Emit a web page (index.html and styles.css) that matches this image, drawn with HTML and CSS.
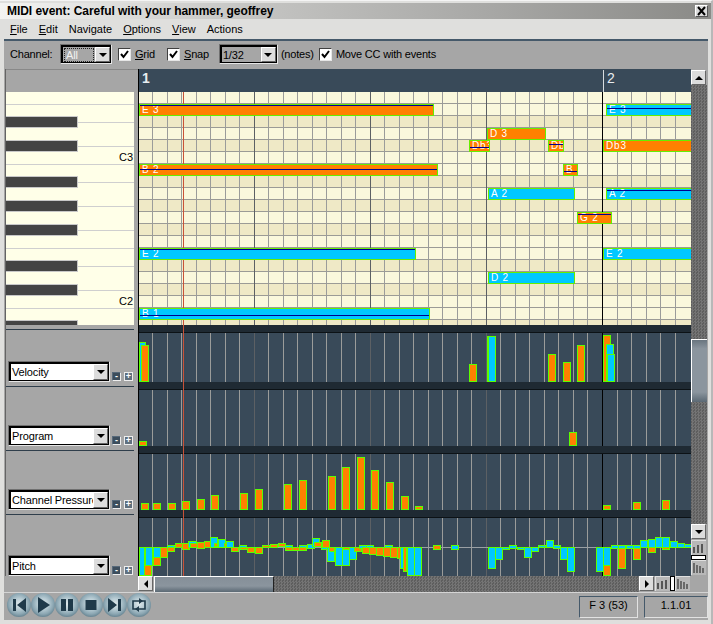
FILE: index.html
```html
<!DOCTYPE html>
<html>
<head>
<meta charset="utf-8">
<title>MIDI event</title>
<link rel="stylesheet" href="styles.css">
</head>
<body>
<div class="window">
  <header class="titlebar">
    <span class="title">MIDI event: Careful with your hammer, geoffrey</span>
    <span class="close"><svg width="11" height="10" viewBox="0 0 11 10"><path d="M2 1l7 8M9 1L2 9" stroke="#000" stroke-width="2" fill="none"/></svg></span>
  </header>
  <nav class="menu">
    <span><u>F</u>ile</span><span><u>E</u>dit</span><span>Navigate</span><span><u>O</u>ptions</span><span><u>V</u>iew</span><span>Actions</span>
  </nav>
  <div class="frame">
    <div class="toolbar">
      <span class="lbl">Channel:</span>
      <div class="combo combo-ch"><div class="combo-in dis"><span class="focus">All</span><span class="drop"></span></div></div>
      <label class="chk chk1"><span class="box"><svg width="9" height="9" viewBox="0 0 9 9"><path d="M1 4l2.5 3L8 1" stroke="#000" stroke-width="2" fill="none"/></svg></span><span><u>G</u>rid</span></label>
      <label class="chk chk2"><span class="box"><svg width="9" height="9" viewBox="0 0 9 9"><path d="M1 4l2.5 3L8 1" stroke="#000" stroke-width="2" fill="none"/></svg></span><span><u>S</u>nap</span></label>
      <div class="combo combo-sn"><div class="combo-in dis2"><span class="val">1/32</span><span class="drop"></span></div></div>
      <span class="lbl notes">(notes)</span>
      <label class="chk chk3"><span class="box"><svg width="9" height="9" viewBox="0 0 9 9"><path d="M1 4l2.5 3L8 1" stroke="#000" stroke-width="2" fill="none"/></svg></span><span>Move CC with events</span></label>
    </div>

    <div class="main">
      <aside class="left">
        <div class="lhead"></div>
        <div class="piano">
          <div class="pr"></div>
          <div class="pr wb"></div>
          <div class="pr k"><i></i></div>
          <div class="pr"></div>
          <div class="pr k"><i></i></div>
          <div class="pr"><em>C3</em></div>
          <div class="pr wb"></div>
          <div class="pr k"><i></i></div>
          <div class="pr"></div>
          <div class="pr k"><i></i></div>
          <div class="pr"></div>
          <div class="pr k"><i></i></div>
          <div class="pr"></div>
          <div class="pr wb"></div>
          <div class="pr k"><i></i></div>
          <div class="pr"></div>
          <div class="pr k"><i></i></div>
          <div class="pr"><em>C2</em></div>
          <div class="pr wb"></div>
          <div class="pr k"><i></i></div>
        </div>
        <div class="cc cc1"><div class="ccrule"></div><div class="ccctl"><div class="combo combo-cc"><div class="combo-in"><span class="val">Velocity</span><span class="drop"></span></div></div><span class="mini minus">-</span><span class="mini plus">+</span></div></div>
        <div class="cc cc2"><div class="ccrule"></div><div class="ccctl"><div class="combo combo-cc"><div class="combo-in"><span class="val">Program</span><span class="drop"></span></div></div><span class="mini minus">-</span><span class="mini plus">+</span></div></div>
        <div class="cc cc2"><div class="ccrule"></div><div class="ccctl"><div class="combo combo-cc"><div class="combo-in"><span class="val">Channel Pressure</span><span class="drop"></span></div></div><span class="mini minus">-</span><span class="mini plus">+</span></div></div>
        <div class="cc cc4"><div class="ccrule"></div><div class="ccctl"><div class="combo combo-cc"><div class="combo-in"><span class="val">Pitch</span><span class="drop"></span></div></div><span class="mini minus">-</span><span class="mini plus">+</span></div></div>
      </aside>

      <section class="canvas">
        <div class="timeline">
          <span class="barnum first">1</span>
          <span class="barnum second">2</span>
        </div>
        <div class="grid">
          <div class="row"></div><div class="row"></div><div class="row dk"></div><div class="row"></div><div class="row dk"></div>
          <div class="row"></div><div class="row"></div><div class="row dk"></div><div class="row"></div><div class="row dk"></div>
          <div class="row"></div><div class="row dk"></div><div class="row"></div><div class="row"></div><div class="row dk"></div>
          <div class="row"></div><div class="row dk"></div><div class="row"></div><div class="row"></div><div class="row dk"></div>

          <div class="note or" style="left:0;top:12px;width:295px"><span>E 3</span><b style="top:0"></b></div>
          <div class="note cy" style="left:467px;top:12px;width:90px"><span>E 3</span><b style="top:3px"></b></div>
          <div class="note or" style="left:348px;top:36px;width:59px"><span>D 3</span><b style="top:-1px"></b></div>
          <div class="note or" style="left:330px;top:48px;width:21px"><span>Db3</span><b style="top:6px"></b></div>
          <div class="note or" style="left:409px;top:48px;width:16px"><span>Db3</span><b style="top:3px"></b></div>
          <div class="note or" style="left:464px;top:48px;width:92px"><span>Db3</span><b style="top:-1px"></b></div>
          <div class="note or" style="left:0;top:72px;width:299px"><span>B 2</span><b style="top:4px"></b></div>
          <div class="note or" style="left:424px;top:72px;width:15px"><span>B 2</span><b style="top:6px"></b></div>
          <div class="note cy" style="left:349px;top:96px;width:87px"><span>A 2</span><b style="top:-1px"></b></div>
          <div class="note cy" style="left:467px;top:96px;width:90px"><span>A 2</span><b style="top:1px"></b></div>
          <div class="note or" style="left:438px;top:120px;width:35px"><span>G 2</span><b style="top:1px"></b></div>
          <div class="note cy" style="left:0;top:156px;width:277px"><span>E 2</span><b style="top:0"></b></div>
          <div class="note cy" style="left:464px;top:156px;width:92px"><span>E 2</span><b style="top:-1px"></b></div>
          <div class="note cy" style="left:349px;top:180px;width:87px"><span>D 2</span><b style="top:-1px"></b></div>
          <div class="note cy" style="left:0;top:216px;width:291px"><span>B 1</span><b style="top:6px"></b></div>
        </div>

        <div class="band"></div>
        <div class="pane p1">
          <i class="b c" style="left:0;top:9px;width:7px;height:40px"></i>
          <i class="b o" style="left:2px;top:12px;width:8px;height:37px"></i>
          <i class="b o" style="left:330px;top:31px;width:8px;height:18px"></i>
          <i class="b o" style="left:348px;top:3px;width:8px;height:46px"></i>
          <i class="b c" style="left:349px;top:3px;width:8px;height:46px"></i>
          <i class="b o" style="left:409px;top:21px;width:8px;height:28px"></i>
          <i class="b o" style="left:424px;top:29px;width:8px;height:20px"></i>
          <i class="b o" style="left:438px;top:12px;width:8px;height:37px"></i>
          <i class="b o" style="left:464px;top:2px;width:8px;height:47px"></i>
          <i class="b c" style="left:467px;top:11px;width:8px;height:38px"></i>
          <i class="b c" style="left:468px;top:21px;width:8px;height:28px"></i>
        </div>
        <div class="band"></div>
        <div class="pane p2">
          <i class="b o" style="left:0;top:51px;width:8px;height:5px"></i>
          <i class="b o" style="left:430px;top:42px;width:8px;height:14px"></i>
        </div>
        <div class="band"></div>
        <div class="pane p2">
          <i class="b o" style="left:2px;top:49px;width:8px;height:7px"></i>
          <i class="b o" style="left:14px;top:49px;width:8px;height:7px"></i>
          <i class="b o" style="left:29px;top:49px;width:8px;height:7px"></i>
          <i class="b o" style="left:43px;top:47px;width:8px;height:9px"></i>
          <i class="b o" style="left:58px;top:45px;width:8px;height:11px"></i>
          <i class="b o" style="left:72px;top:41px;width:8px;height:15px"></i>
          <i class="b o" style="left:101px;top:39px;width:8px;height:17px"></i>
          <i class="b o" style="left:116px;top:35px;width:8px;height:21px"></i>
          <i class="b o" style="left:145px;top:30px;width:8px;height:26px"></i>
          <i class="b o" style="left:160px;top:26px;width:8px;height:30px"></i>
          <i class="b o" style="left:189px;top:22px;width:8px;height:34px"></i>
          <i class="b o" style="left:203px;top:13px;width:8px;height:43px"></i>
          <i class="b o" style="left:218px;top:3px;width:8px;height:53px"></i>
          <i class="b o" style="left:232px;top:16px;width:8px;height:40px"></i>
          <i class="b o" style="left:247px;top:28px;width:8px;height:28px"></i>
          <i class="b o" style="left:262px;top:42px;width:8px;height:14px"></i>
          <i class="b o" style="left:276px;top:52px;width:8px;height:4px"></i>
          <i class="b o" style="left:464px;top:51px;width:8px;height:5px"></i>
          <i class="b o" style="left:494px;top:48px;width:8px;height:8px"></i>
          <i class="b o" style="left:523px;top:46px;width:8px;height:10px"></i>
        </div>
        <div class="band"></div>
        <div class="pane p4">
          <div class="axis"></div>
          <i class="b c" style="left:0;top:29px;width:6px;height:29px"></i>
          <i class="b c" style="left:6px;top:29px;width:8px;height:19px"></i>
          <i class="b o" style="left:5px;top:47px;width:8px;height:11px"></i>
          <i class="b c" style="left:14px;top:29px;width:8px;height:11px"></i>
          <i class="b o" style="left:14px;top:39px;width:8px;height:9px"></i>
          <i class="b o" style="left:21px;top:29px;width:8px;height:11px"></i>
          <i class="b c" style="left:28px;top:27px;width:8px;height:3px"></i>
          <i class="b o" style="left:28px;top:29px;width:8px;height:5px"></i>
          <i class="b o" style="left:36px;top:25px;width:8px;height:5px"></i>
          <i class="b o" style="left:43px;top:25px;width:8px;height:7px"></i>
          <i class="b c" style="left:49px;top:23px;width:9px;height:7px"></i>
          <i class="b o" style="left:51px;top:25px;width:8px;height:5px"></i>
          <i class="b o" style="left:58px;top:24px;width:8px;height:7px"></i>
          <i class="b o" style="left:65px;top:23px;width:8px;height:7px"></i>
          <i class="b c" style="left:71px;top:19px;width:8px;height:11px"></i>
          <i class="b o" style="left:75px;top:25px;width:4px;height:4px"></i>
          <i class="b c" style="left:79px;top:21px;width:8px;height:9px"></i>
          <i class="b o" style="left:85px;top:25px;width:3px;height:4px"></i>
          <i class="b c" style="left:87px;top:23px;width:8px;height:7px"></i>
          <i class="b o" style="left:92px;top:29px;width:8px;height:5px"></i>
          <i class="b c" style="left:100px;top:27px;width:8px;height:5px"></i>
          <i class="b o" style="left:101px;top:29px;width:8px;height:3px"></i>
          <i class="b o" style="left:108px;top:29px;width:8px;height:6px"></i>
          <i class="b o" style="left:116px;top:29px;width:8px;height:7px"></i>
          <i class="b o" style="left:123px;top:27px;width:8px;height:3px"></i>
          <i class="b o" style="left:131px;top:26px;width:8px;height:4px"></i>
          <i class="b o" style="left:139px;top:25px;width:8px;height:4px"></i>
          <i class="b c" style="left:146px;top:27px;width:8px;height:3px"></i>
          <i class="b o" style="left:146px;top:29px;width:8px;height:4px"></i>
          <i class="b o" style="left:153px;top:29px;width:8px;height:4px"></i>
          <i class="b c" style="left:160px;top:27px;width:8px;height:3px"></i>
          <i class="b o" style="left:160px;top:29px;width:8px;height:4px"></i>
          <i class="b c" style="left:168px;top:26px;width:8px;height:5px"></i>
          <i class="b c" style="left:173px;top:20px;width:8px;height:9px"></i>
          <i class="b o" style="left:175px;top:24px;width:8px;height:5px"></i>
          <i class="b c" style="left:182px;top:29px;width:8px;height:3px"></i>
          <i class="b o" style="left:183px;top:22px;width:8px;height:8px"></i>
          <i class="b c" style="left:188px;top:29px;width:8px;height:15px"></i>
          <i class="b o" style="left:190px;top:29px;width:6px;height:5px"></i>
          <i class="b c" style="left:196px;top:29px;width:8px;height:19px"></i>
          <i class="b c" style="left:203px;top:29px;width:8px;height:19px"></i>
          <i class="b o" style="left:204px;top:29px;width:7px;height:3px"></i>
          <i class="b c" style="left:210px;top:29px;width:8px;height:13px"></i>
          <i class="b o" style="left:215px;top:29px;width:8px;height:5px"></i>
          <i class="b c" style="left:220px;top:27px;width:8px;height:4px"></i>
          <i class="b o" style="left:223px;top:29px;width:8px;height:7px"></i>
          <i class="b c" style="left:227px;top:27px;width:8px;height:3px"></i>
          <i class="b o" style="left:230px;top:29px;width:8px;height:8px"></i>
          <i class="b o" style="left:237px;top:29px;width:8px;height:9px"></i>
          <i class="b c" style="left:246px;top:27px;width:8px;height:3px"></i>
          <i class="b o" style="left:244px;top:29px;width:8px;height:10px"></i>
          <i class="b o" style="left:251px;top:29px;width:8px;height:11px"></i>
          <i class="b o" style="left:258px;top:29px;width:8px;height:12px"></i>
          <i class="b c" style="left:261px;top:29px;width:6px;height:22px"></i>
          <i class="b o" style="left:264px;top:29px;width:4px;height:25px"></i>
          <i class="b c" style="left:268px;top:29px;width:8px;height:29px"></i>
          <i class="b c" style="left:275px;top:29px;width:8px;height:29px"></i>
          <i class="b o" style="left:294px;top:27px;width:8px;height:5px"></i>
          <i class="b c" style="left:312px;top:27px;width:8px;height:5px"></i>
          <i class="b c" style="left:349px;top:29px;width:8px;height:22px"></i>
          <i class="b c" style="left:356px;top:29px;width:8px;height:13px"></i>
          <i class="b c" style="left:363px;top:29px;width:8px;height:3px"></i>
          <i class="b c" style="left:370px;top:27px;width:8px;height:4px"></i>
          <i class="b c" style="left:378px;top:29px;width:8px;height:3px"></i>
          <i class="b c" style="left:385px;top:29px;width:8px;height:11px"></i>
          <i class="b c" style="left:392px;top:29px;width:8px;height:5px"></i>
          <i class="b c" style="left:399px;top:27px;width:8px;height:3px"></i>
          <i class="b c" style="left:407px;top:22px;width:8px;height:8px"></i>
          <i class="b c" style="left:414px;top:27px;width:8px;height:4px"></i>
          <i class="b c" style="left:421px;top:29px;width:8px;height:13px"></i>
          <i class="b c" style="left:428px;top:29px;width:8px;height:25px"></i>
          <i class="b c" style="left:457px;top:29px;width:8px;height:25px"></i>
          <i class="b c" style="left:464px;top:29px;width:8px;height:19px"></i>
          <i class="b o" style="left:464px;top:47px;width:8px;height:11px"></i>
          <i class="b c" style="left:472px;top:27px;width:8px;height:4px"></i>
          <i class="b c" style="left:479px;top:27px;width:8px;height:4px"></i>
          <i class="b o" style="left:479px;top:30px;width:8px;height:21px"></i>
          <i class="b c" style="left:487px;top:27px;width:8px;height:4px"></i>
          <i class="b c" style="left:494px;top:27px;width:8px;height:4px"></i>
          <i class="b o" style="left:494px;top:30px;width:8px;height:12px"></i>
          <i class="b c" style="left:501px;top:22px;width:8px;height:8px"></i>
          <i class="b c" style="left:509px;top:21px;width:8px;height:9px"></i>
          <i class="b o" style="left:509px;top:29px;width:8px;height:6px"></i>
          <i class="b c" style="left:516px;top:19px;width:8px;height:11px"></i>
          <i class="b c" style="left:523px;top:19px;width:8px;height:11px"></i>
          <i class="b o" style="left:523px;top:29px;width:8px;height:3px"></i>
          <i class="b c" style="left:531px;top:23px;width:8px;height:7px"></i>
          <i class="b c" style="left:538px;top:25px;width:8px;height:5px"></i>
          <i class="b c" style="left:545px;top:26px;width:8px;height:4px"></i>
        </div>

        <div class="vlines"><i></i><i></i><i></i><i></i><i></i><i></i><i></i><i class="q"></i><i></i><i></i><i></i><i></i><i></i><i></i><i></i><i class="q"></i><i></i><i></i><i></i><i></i><i></i><i></i><i></i><i class="q"></i><i></i><i></i><i></i><i></i><i></i><i></i><i></i><i class="bar"></i><i></i><i></i><i></i><i></i><i></i></div>
        <div class="playhead"></div>
      </section>

      <aside class="vscroll">
        <span class="sbtn"><em class="up"></em></span>
        <div class="vtrack"><div class="vthumb"></div></div>
        <span class="sbtn"><em class="down"></em></span>
        <span class="zbtn zv"><svg width="15" height="15" viewBox="0 0 15 15"><use href="#z-out"/></svg></span>
        <span class="zsep-v"></span>
        <span class="zbtn"><svg width="15" height="15" viewBox="0 0 15 15"><use href="#z-in"/></svg></span>
      </aside>
    </div>

    <div class="hrow">
      <span class="sbtn"><em class="lft"></em></span>
      <div class="hthumb"></div>
      <div class="htrack"></div>
      <span class="sbtn"><em class="rgt"></em></span>
      <span class="zbtn zh"><svg width="15" height="15" viewBox="0 0 15 15"><use href="#z-out"/></svg></span>
      <span class="zsep-h"></span>
      <span class="zbtn"><svg width="15" height="15" viewBox="0 0 15 15"><use href="#z-in"/></svg></span>
    </div>

    <footer class="status">
      <div class="transport">
        <span class="tb"><svg width="24" height="24" viewBox="0 0 24 24"><path d="M6 6h3v12H6zM19 5v14l-9-7z" fill="#1f3a4a"/></svg></span>
        <span class="tb"><svg width="24" height="24" viewBox="0 0 24 24"><path d="M7 4l12 8-12 8z" fill="#1f3a4a"/></svg></span>
        <span class="tb"><svg width="24" height="24" viewBox="0 0 24 24"><path d="M6 6h5v12H6zM13 6h5v12h-5z" fill="#1f3a4a"/></svg></span>
        <span class="tb"><svg width="24" height="24" viewBox="0 0 24 24"><path d="M6.500 7h11v10h-11z" fill="#1f3a4a"/></svg></span>
        <span class="tb"><svg width="24" height="24" viewBox="0 0 24 24"><path d="M5 5l9 7-9 7zM15 6h3v12h-3z" fill="#1f3a4a"/></svg></span>
        <span class="tb"><svg width="24" height="24" viewBox="0 0 24 24"><path d="M8 8h10v8H9M16 16H6V8h3" stroke="#1f3a4a" stroke-width="1.600" fill="none"/><path d="M12 5l4 3-4 3zM12 13l-4 3 4 3z" fill="#1f3a4a"/></svg></span>
      </div>
      <div class="pane-stat s1">F 3 (53)</div>
      <div class="pane-stat s2">1.1.01</div>
    </footer>
  </div>
</div>
<svg class="defs" width="0" height="0">
  <symbol id="z-out" viewBox="0 0 15 15"><path d="M3 7v6M7 5v8M11 4v9" stroke="#555" stroke-width="2"/></symbol>
  <symbol id="z-in" viewBox="0 0 15 15"><path d="M3 3v10M6 5v8M9 6v7M12 8v5" stroke="#555" stroke-width="1.600"/></symbol>
</svg>
</body>
</html>
```
FILE: styles.css
```css
* { box-sizing: border-box; }
html, body { margin: 0; padding: 0; }
body {
  width: 713px;
  height: 624px;
  overflow: hidden;
  font-family: "Liberation Sans", Arial, sans-serif;
  font-size: 11px;
  color: #000;
  background: #dedede;
}
.defs { position: absolute; }
.window {
  width: 713px;
  height: 624px;
  display: flex;
  flex-direction: column;
  padding-top: 3px;
  border-right: 2px solid #b8b8b8;
  border-top: 1px solid #f4f4f4;
  background: #dfdfdd;
}

/* title */
.titlebar {
  height: 16px;
  margin-top: -1px;
  display: flex;
  align-items: center;
  justify-content: space-between;
  padding: 0 3px 0 7px;
  background: linear-gradient(90deg, #f4f4f2 0, #c6c6c4 34%, #a8a8a6 68%, #8a8a87 100%);
}
.title { font-weight: bold; font-size: 12px; letter-spacing: -0.05px; }
.close {
  width: 13px;
  height: 12px;
  display: flex;
  align-items: center;
  justify-content: center;
  background: #dcdcdc;
  border: 1px solid;
  border-color: #fff #555 #555 #fff;
}

/* menu */
.menu {
  height: 20px;
  display: flex;
  align-items: center;
  gap: 11px;
  padding-left: 10px;
  font-size: 11px;
}

/* frame */
.frame {
  width: 704px;
  margin-left: 4px;
  display: flex;
  flex-direction: column;
  flex: 1;
  background: #a6a6a6;
  border-top: 2px solid #45596a;
  margin-bottom: 4px;
}
.toolbar {
  height: 28px;
  display: flex;
  align-items: center;
  padding-left: 6px;
  padding-bottom: 2px;
  letter-spacing: -0.2px;
}
.lbl { white-space: nowrap; flex: none; }
.toolbar > .lbl:first-child { width: 41px; }
.combo {
  flex: none;
  border: 1px solid;
  border-color: #707070 #e6e6e6 #e6e6e6 #707070;
}
.combo-in {
  height: 100%;
  display: flex;
  align-items: center;
  justify-content: space-between;
  background: #fff;
  border: 2px solid #000;
  border-right-width: 1px;
  border-bottom-width: 1px;
  overflow: hidden;
}
.combo-ch { width: 52px; height: 20px; margin-left: 9px; }
.combo-sn { width: 59px; height: 20px; margin-left: 10px; }
.dis, .dis2 { background: #a6a6a6; }
.focus {
  flex: 1;
  margin: 1px;
  padding-left: 1px;
  height: 14px;
  line-height: 12px;
  color: #f2f2f2;
  border: 1px dotted #222;
}
.val { flex: 1; padding-left: 1px; white-space: nowrap; overflow: hidden; letter-spacing: -0.15px; }
.drop {
  flex: none;
  width: 15px;
  height: 100%;
  display: flex;
  align-items: center;
  justify-content: center;
  background: #dcdcdc;
  border: 1px solid;
  border-color: #fff #666 #666 #fff;
}
.drop::after {
  content: "";
  border-left: 4px solid transparent;
  border-right: 4px solid transparent;
  border-top: 4px solid #000;
}
.chk { display: flex; align-items: center; gap: 4px; white-space: nowrap; flex: none; }
.chk1 { margin-left: 6px; }
.chk2 { margin-left: 12px; }
.chk3 { margin-left: 5px; }
.notes { margin-left: 3px; width: 33px; }
.box {
  width: 13px;
  height: 13px;
  display: flex;
  align-items: center;
  justify-content: center;
  background: #fff;
  border: 1px solid;
  border-color: #404040 #e6e6e6 #e6e6e6 #404040;
}

/* main */
.main { height: 507px; display: flex; }
.left {
  width: 133px;
  margin-left: 1px;
  border-left: 1px solid #646464;
  display: flex;
  flex-direction: column;
  flex: none;
}
.lhead { height: 23px; border-top: 1px solid #888; }
.piano {
  width: 128px;
  height: 233px;
  overflow: hidden;
  background: #ffffe8;
}
.pr { height: 12px; position: relative; flex: none; }
.pr.wb { border-top: 1px solid #cfcfcf; }
.pr.k::after {
  content: "";
  position: absolute;
  left: 72px;
  right: 0;
  top: 6px;
  height: 1px;
  background: #cfcfcf;
}
.pr i {
  position: absolute;
  left: 0;
  top: 0;
  width: 72px;
  height: 12px;
  background: #444;
  border: 1px solid #c8c8c8;
  border-left: 0;
}
.pr em {
  display: block;
  font-style: normal;
  text-align: right;
  line-height: 10px;
  padding-right: 1px;
}
.cc { display: flex; flex-direction: column; padding-top: 4px; }
.cc1 { height: 57px; }
.cc2 { height: 64px; }
.cc4 { height: 66px; }
.ccrule { width: 128px; border-top: 1px solid #2f3e4b; }
.ccctl { margin-top: auto; display: flex; align-items: flex-end; padding-left: 2px; }
.combo-cc { width: 102px; height: 21px; }
.mini {
  flex: none;
  width: 9px;
  height: 9px;
  margin-bottom: 1px;
  margin-left: 3px;
  display: flex;
  align-items: center;
  justify-content: center;
  font-size: 9px;
  line-height: 7px;
  font-weight: bold;
}
.minus { margin-left: 2px; background: #3c4d5c; color: #fff; border: 1px solid #d0d0d0; border-color: #56697a #eee #eee #56697a; }
.plus { background: #60707e; color: #fff; border: 1px solid #eee; }

/* canvas */
.canvas {
  position: relative;
  width: 553px;
  flex: none;
  border-left: 1px solid #000;
  display: flex;
  flex-direction: column;
}
.timeline {
  height: 23px;
  position: relative;
  background: #394a59;
  color: #e8edf0;
  font-size: 14px;
}
.timeline::after {
  content: "";
  position: absolute;
  left: 464px;
  top: 1px;
  bottom: 0;
  width: 1px;
  background: #d8dde0;
}
.barnum { position: absolute; top: 1px; line-height: 16px; }
.barnum.first { left: 3px; font-weight: bold; }
.barnum.second { left: 468px; }
.grid {
  height: 233px;
  position: relative;
  overflow: hidden;
  flex: none;
}
.row { height: 12px; background: #faf8dc; border-bottom: 1px solid #9b9b96; }
.row.dk { background: #efe9c6; }
.note {
  position: absolute;
  height: 12px;
  z-index: 4;
  border: 1px solid #66ee00;
  overflow: hidden;
  color: #fff;
  font-size: 10px;
  line-height: 10px;
  white-space: nowrap;
}
.note span { position: absolute; left: 2px; top: 0; letter-spacing: 0.8px; }
.note b { position: absolute; left: 0; right: 0; height: 1px; background: #000090; }
.note.or { background: #ff8000; }
.note.cy { background: #00c8ff; }
.band {
  height: 8px;
  flex: none;
  position: relative;
  z-index: 2;
  background: #1f2a33;
  border-bottom: 1px solid #0c1216;
}
.pane { position: relative; overflow: hidden; background: #394a59; flex: none; }
.p1 { height: 49px; }
.p2 { height: 56px; }
.p4 { height: 58px; }
.axis { position: absolute; left: 0; right: 0; top: 29px; height: 1px; background: #9aa0a4; z-index: 2; }
.b { position: absolute; z-index: 4; border: 1px solid #5cff00; }
.b.o { background: #ff8000; }
.b.c { background: #00c8ff; }
.vlines {
  position: absolute;
  left: 13px;
  top: 23px;
  bottom: 0;
  z-index: 1;
  display: flex;
}
.vlines i { flex: none; width: 14.53px; border-left: 1px solid #9b9c9a; }
.vlines i.q { border-left-color: #5c6064; }
.vlines i.bar { border-left-color: #000; }
.playhead {
  position: absolute;
  left: 44px;
  top: 23px;
  bottom: 0;
  width: 1px;
  background: #c85238;
  z-index: 3;
}

/* scrollbars */
.vscroll { width: 16px; flex: none; display: flex; flex-direction: column; padding-top: 1px; }
.sbtn {
  flex: none;
  width: 15px;
  height: 15px;
  display: flex;
  align-items: center;
  justify-content: center;
  background: #dcdcdc;
  border: 1px solid;
  border-color: #fff #666 #666 #fff;
}
.sbtn em { display: block; width: 0; height: 0; border: 4px solid transparent; }
.sbtn .up { border-top: 0; border-bottom-color: #000; }
.sbtn .down { border-bottom: 0; border-top-color: #000; }
.sbtn .lft { border-left: 0; border-right-color: #000; }
.sbtn .rgt { border-right: 0; border-left-color: #000; }
.vtrack {
  height: 439px;
  flex: none;
  background: conic-gradient(#747474 25%, #5e5e5e 0 50%, #747474 0 75%, #5e5e5e 0) 0 0 / 3px 3px;
}
.vthumb {
  height: 63px;
  margin-top: 254px;
  border-top: 1px solid #fff;
  border-left: 1px solid #fff;
  background: linear-gradient(180deg, #69757f, #8b959e 14%, #8b959e 84%, #5b6974);
}
.zbtn {
  flex: none;
  width: 15px;
  height: 15px;
  display: block;
  background: #b8b8b8;
  border-top: 1px solid #e0e0e0;
  border-left: 1px solid #e0e0e0;
}
.zbtn svg { display: block; margin: -1px 0 0 -1px; }
.zv { margin-top: 1px; }
.zsep-v {
  flex: none;
  width: 15px;
  height: 5px;
  background: #fff;
  border: 1px solid #000;
}
.hrow { height: 16px; display: flex; padding-left: 134px; }
.hthumb {
  width: 120px;
  margin-left: 1px;
  border-top: 1px solid #fff;
  border-left: 1px solid #fff;
  background: linear-gradient(180deg, #858f98, #8b959e 60%, #5b6974);
  border-right: 1px solid #222;
}
.htrack {
  width: 365px;
  background: conic-gradient(#747474 25%, #5e5e5e 0 50%, #747474 0 75%, #5e5e5e 0) 0 0 / 3px 3px;
}
.zh { margin-left: 1px; }
.zsep-h {
  flex: none;
  width: 5px;
  height: 15px;
  background: #fff;
  border: 1px solid #000;
}

/* status */
.status {
  flex: 1;
  display: flex;
  align-items: flex-start;
  border-top: 1px solid #d4d4d4;
}
.transport { display: flex; padding-left: 3px; }
.tb {
  width: 24px;
  height: 24px;
  display: block;
  border-radius: 50%;
  background: radial-gradient(circle at 50% 45%, #dfe9ec 0, #b8ccd4 30%, #8ba6b2 58%, #567482 82%, #324a58 100%);
}
.tb svg { display: block; }
.pane-stat {
  margin-top: 3px;
  height: 22px;
  padding-top: 1px;
  text-align: center;
  font-size: 11px;
  line-height: 14px;
  border: 1px solid;
  border-color: #45596a #e2e2e2 #e2e2e2 #45596a;
}
.s1 { width: 59px; margin-left: auto; }
.s2 { width: 64px; margin-left: 6px; }
```
